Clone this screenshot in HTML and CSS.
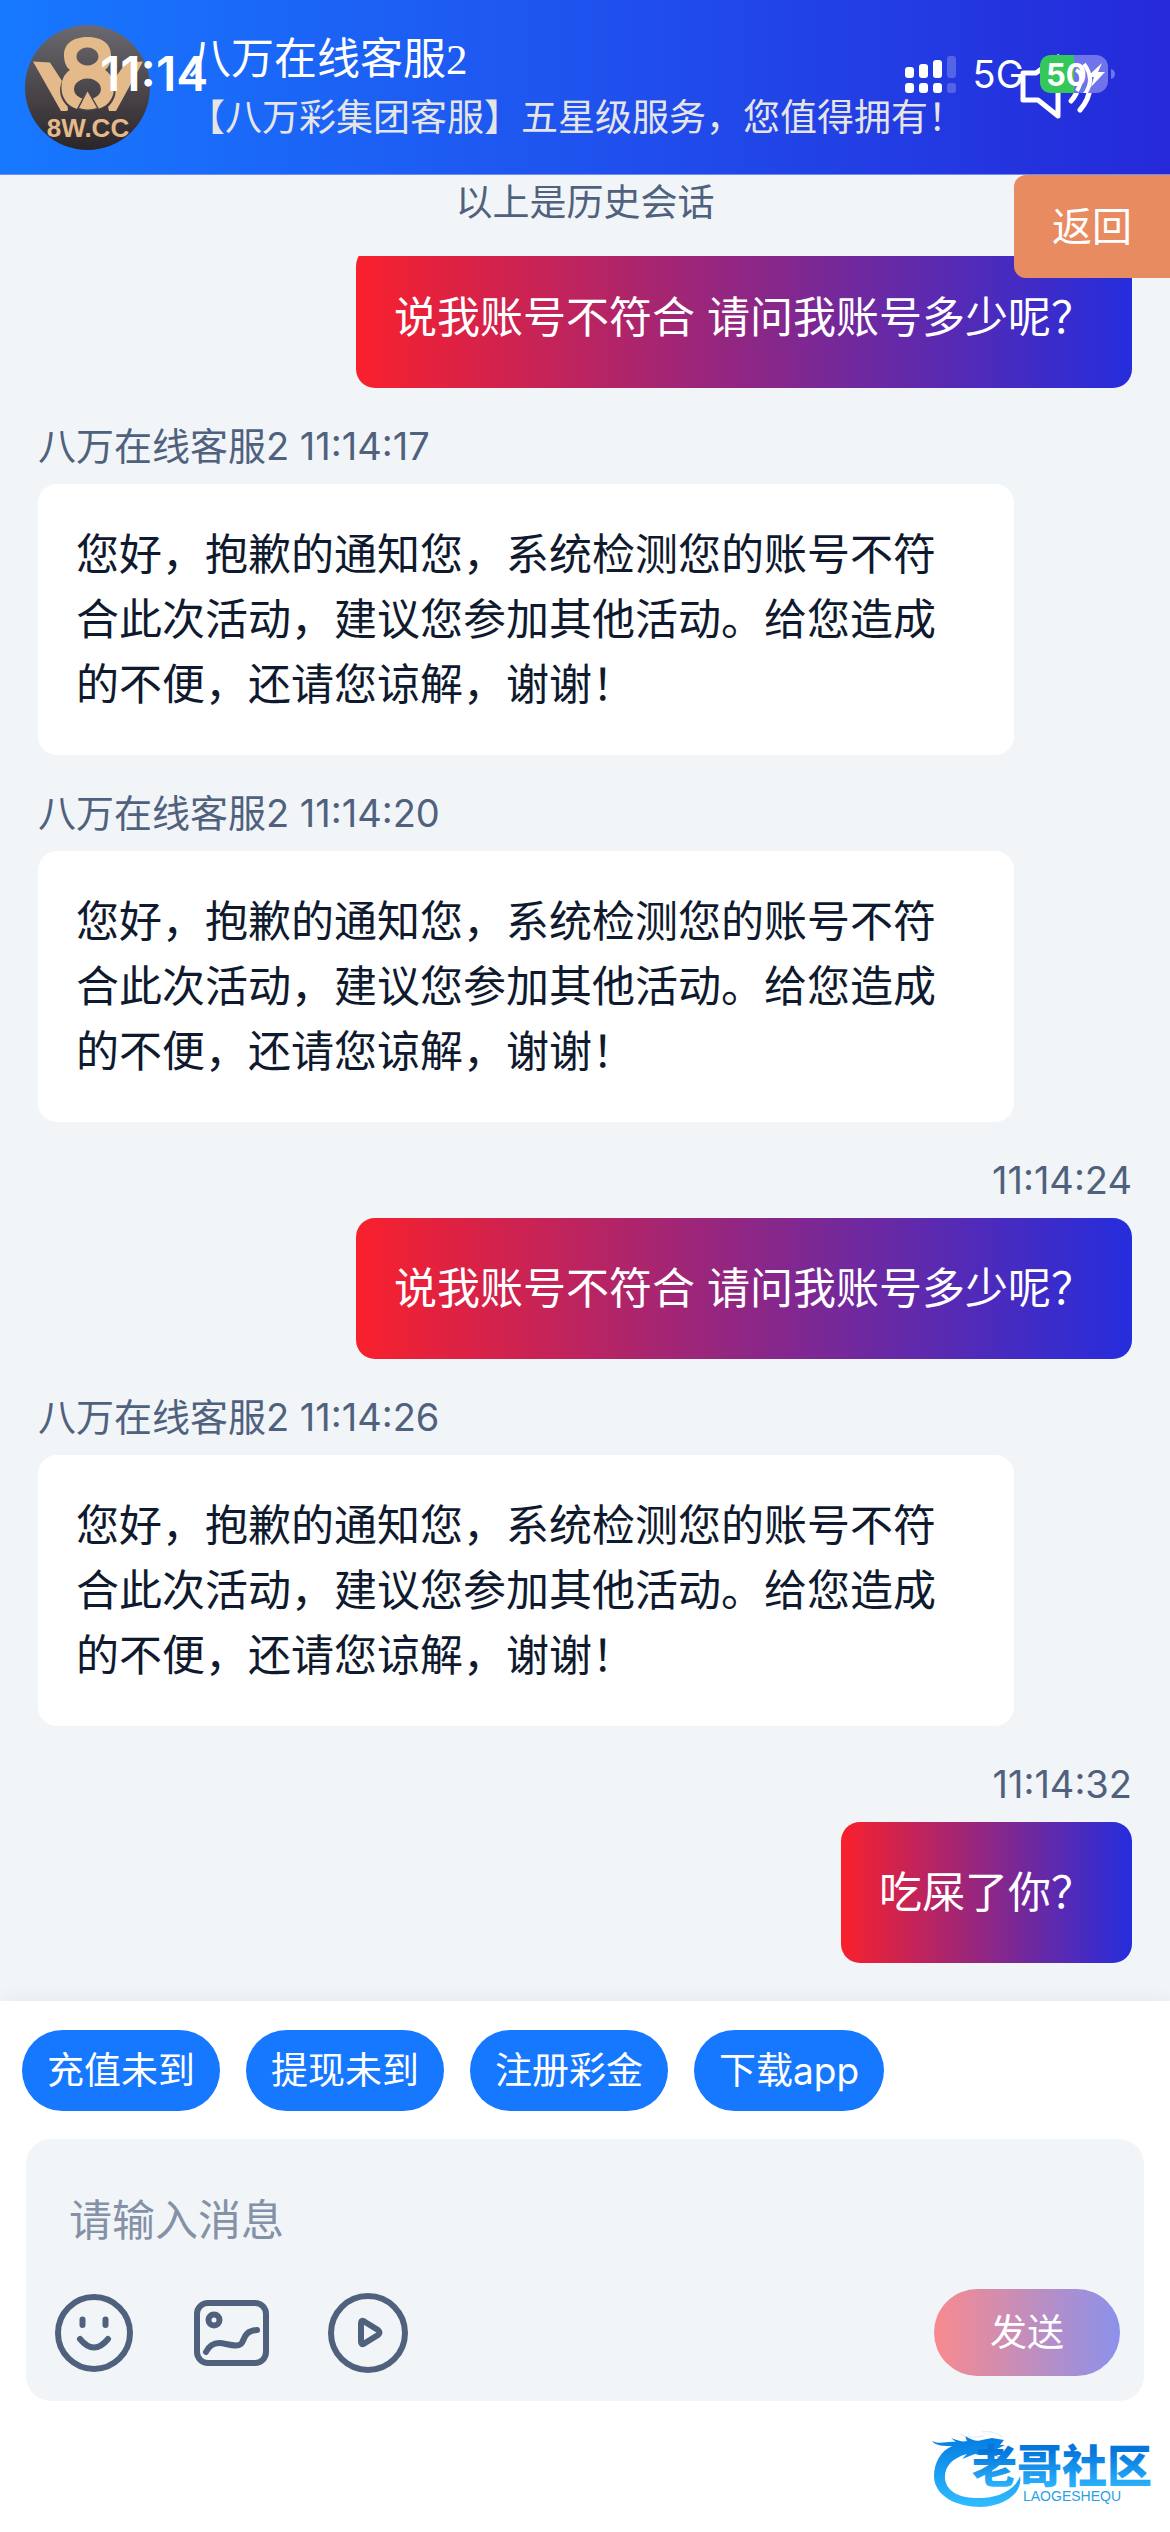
FILE: index.html
```html
<!DOCTYPE html>
<html lang="zh-CN">
<head>
<meta charset="utf-8">
<meta name="viewport" content="width=device-width, initial-scale=1">
<title>八万在线客服2</title>
<link rel="stylesheet" href="styles.css">
</head>
<body>
<div class="app">
  <header class="header">
    <svg class="avatar" viewBox="0 0 125 125" role="img" aria-label="8W.CC">
      <defs>
        <linearGradient id="avatarShade" x1="0" y1="0" x2="0" y2="1">
          <stop offset="0" stop-color="#6b6a70"/>
          <stop offset="1" stop-color="#2b2528"/>
        </linearGradient>
      </defs>
      <circle cx="62.500" cy="62.500" r="62.500" fill="url(#avatarShade)"/>
      <g fill="#e5ba8b">
        <path d="M8 36.500L25 37.500L37 56Q31 70 43 82L35 86L42 81Q44 85 42 86H36Z"/>
        <path d="M118 36.500L101 37.500L88 56Q95 70 83 82L84 86H91Z"/>
        <path fill-rule="evenodd" d="M62.500 12C49 12 39 18 39 30C39 37 41 42 45 45C39 49 36.500 55 36.500 63C36.500 72 42 81 52 84L61 67L73 84C84 81 89 72 89 63C89 55 86 49 80 45C84 42 86 37 86 30C86 18 76 12 62.500 12ZM62.500 22.500A11 9 0 1 1 62.400 22.500ZM62.500 53.500A13.500 10.500 0 1 1 62.400 53.500Z"/>
        <path d="M62.500 65L53 83.500Q62.500 87 73 83.500Z" stroke="#4a464b" stroke-width="1.500"/>
      </g>
      <text class="avatar-text" x="63" y="112" text-anchor="middle">8W.CC</text>
    </svg>
    <div class="agent">
      <h1 class="agent-name">八万在线客服2</h1>
      <p class="agent-note">【八万彩集团客服】五星级服务，您值得拥有！</p>
    </div>
    <button class="sound" type="button" aria-label="声音">
      <svg viewBox="0 0 80 80" fill="none" stroke="#fff" stroke-width="5" stroke-linecap="round" stroke-linejoin="round">
        <path d="M5 25H18L40 9V68L20 52H5Z"/>
        <path d="M54 23Q66 39 53 53"/>
        <path d="M60 16Q82 39 62 62"/>
      </svg>
    </button>
  </header>

  <div class="status">
    <span class="clock">11:14</span>
    <div class="status-right">
      <svg class="signal" viewBox="0 0 52 38" fill="#fff" aria-hidden="true">
        <rect x="0" y="12" width="9" height="11" rx="3"/><rect x="0" y="28" width="9" height="10" rx="3"/>
        <rect x="14" y="9" width="9" height="14" rx="3"/><rect x="14" y="28" width="9" height="10" rx="3"/>
        <rect x="28" y="5" width="9" height="18" rx="3"/><rect x="28" y="28" width="9" height="10" rx="3"/>
        <g opacity=".22"><rect x="42" y="1" width="9" height="22" rx="3"/><rect x="42" y="28" width="9" height="10" rx="3"/></g>
      </svg>
      <span class="network">5G</span>
      <svg class="battery" viewBox="0 0 76 38" role="img" aria-label="50%">
        <rect width="68" height="38" rx="12" fill="#6f74ea"/>
        <path d="M12 0H34V38H12Q0 38 0 26V12Q0 0 12 0Z" fill="#34c759"/>
        <path d="M71 14Q75 15 75 19Q75 23 71 24Z" fill="#6f74ea"/>
        <path d="M36 15Q46 20 37 36M44 9Q56 25 44 40" fill="none" stroke="#fff" stroke-width="4"/>
        <text class="battery-text" x="6" y="31">50</text>
        <path d="M62 8L47 22H54L51 32L65 17H58Z" fill="#fff"/>
      </svg>
    </div>
  </div>

  <main class="chat">
    <button class="back" type="button">返回</button>
    <p class="history">以上是历史会话</p>
    <div class="messages">
      <article class="message mine">
        <p class="bubble">说我账号不符合 请问我账号多少呢？</p>
      </article>
      <article class="message">
        <p class="meta">八万在线客服2 11:14:17</p>
        <p class="bubble">您好，抱歉的通知您，系统检测您的账号不符合此次活动，建议您参加其他活动。给您造成的不便，还请您谅解，谢谢！</p>
      </article>
      <article class="message">
        <p class="meta">八万在线客服2 11:14:20</p>
        <p class="bubble">您好，抱歉的通知您，系统检测您的账号不符合此次活动，建议您参加其他活动。给您造成的不便，还请您谅解，谢谢！</p>
      </article>
      <article class="message mine">
        <p class="meta">11:14:24</p>
        <p class="bubble">说我账号不符合 请问我账号多少呢？</p>
      </article>
      <article class="message">
        <p class="meta">八万在线客服2 11:14:26</p>
        <p class="bubble">您好，抱歉的通知您，系统检测您的账号不符合此次活动，建议您参加其他活动。给您造成的不便，还请您谅解，谢谢！</p>
      </article>
      <article class="message mine">
        <p class="meta">11:14:32</p>
        <p class="bubble">吃屎了你？</p>
      </article>
    </div>
  </main>

  <footer class="footer">
    <nav class="quick">
      <button class="chip" type="button">充值未到</button>
      <button class="chip" type="button">提现未到</button>
      <button class="chip" type="button">注册彩金</button>
      <button class="chip" type="button">下载app</button>
    </nav>
    <form class="composer">
      <input class="entry" type="text" placeholder="请输入消息" aria-label="请输入消息">
      <div class="tools">
        <button class="tool" type="button" aria-label="表情">
          <svg viewBox="0 0 80 80"><circle cx="40" cy="40" r="36"/><path d="M28.500 26.500V32M51.500 26.500V32M26 46Q40 63 54 46"/></svg>
        </button>
        <button class="tool" type="button" aria-label="图片">
          <svg viewBox="0 0 80 80"><rect x="6" y="10" width="69" height="60" rx="11"/><circle cx="23" cy="27" r="5.500"/><path d="M15 59C18 53 23 50 28 50C35 50 45 55 50 51C54 47 52 38 66 37"/></svg>
        </button>
        <button class="tool" type="button" aria-label="视频">
          <svg viewBox="0 0 80 80"><circle cx="40" cy="40" r="37"/><path d="M33 31V48Q33 53 37 50L50 42Q53 39.500 50 37L37 29Q33 26 33 31Z"/></svg>
        </button>
        <button class="send" type="submit">发送</button>
      </div>
    </form>
    <svg class="watermark" viewBox="0 0 222 78" role="img" aria-label="老哥社区 LAOGESHEQU">
      <defs>
        <linearGradient id="markBlue" gradientUnits="userSpaceOnUse" x1="0" y1="10" x2="0" y2="76">
          <stop offset="0" stop-color="#067fe4"/>
          <stop offset="1" stop-color="#30bcff"/>
        </linearGradient>
        <linearGradient id="markText" gradientUnits="userSpaceOnUse" x1="0" y1="22" x2="0" y2="60">
          <stop offset="0" stop-color="#0577dc"/>
          <stop offset="1" stop-color="#2fb9ff"/>
        </linearGradient>
      </defs>
      <path fill="url(#markBlue)" d="M0 11C8 15 15 11 24 12L19 8C27 11 31 12 35 11L33 6C40 10 45 12 50 10L60 8L72 10L68 15H73L65 19L71 23H62L67 27C56 23 50 26 43 24L30 29L35 24C20 28 12 37 13 49C15 64 32 69 50 68C70 67 84 58 88 46C91 63 73 76 49 77C24 77 3 66 2 47C2 32 9 21 20 16C12 16 4 16 0 11Z"/>
      <path d="M28 4Q36 9 52 6M50 2Q62 0 71 7" fill="none" stroke="#dcebf5" stroke-width="1"/>
      <text class="mark-cn" x="40" y="53" fill="url(#markText)">老哥社区</text>
      <text class="mark-en" x="91" y="71" fill="#2a9fe8">LAOGESHEQU</text>
    </svg>
  </footer>
</div>
</body>
</html>
```
FILE: styles.css
```css
* { box-sizing: border-box; }

body {
  margin: 0;
  font-family: Inter, "Noto Sans CJK SC", sans-serif;
  background: #fff;
}

h1, p { margin: 0; font-weight: 400; }

button {
  border: 0;
  margin: 0;
  padding: 0;
  background: none;
  color: #fff;
  font: inherit;
  cursor: pointer;
}

.app {
  position: relative;
  display: flex;
  flex-direction: column;
  height: 100vh;
  background: #f1f5f8;
}

/* Header */
.header {
  display: flex;
  align-items: center;
  gap: 38px;
  padding: 25px 72px 24px 25px;
  border-bottom: 1px solid #6f8df5;
  background: linear-gradient(90deg, #1779ff, #1f52ee 50%, #2529d9);
  color: #fff;
}

.avatar { flex: none; width: 125px; height: 125px; }
.avatar-text { font: 700 26px "Liberation Sans", sans-serif; fill: #e5ba8b; }
.agent { flex: 1; min-width: 0; padding-top: 2px; }

.agent-name {
  font-family: "Liberation Serif", "Noto Sans CJK SC", serif;
  font-size: 43px;
  line-height: 58px;
}

.agent-note {
  font-size: 37px;
  line-height: 58px;
  color: #e5e5e5;
  white-space: nowrap;
}

.sound { flex: none; width: 80px; height: 80px; }
.sound svg { display: block; }

/* Phone status bar, lies over the header */
.status {
  position: absolute;
  top: 46px;
  left: 0;
  right: 0;
  display: flex;
  justify-content: space-between;
  align-items: center;
  height: 56px;
  padding: 0 54px 0 100px;
  color: #fff;
  pointer-events: none;
}

.clock { font-size: 48px; font-weight: 600; line-height: 56px; }
.status-right { display: flex; align-items: center; gap: 16px; }
.signal { width: 52px; height: 38px; }
.network { font-size: 38px; line-height: 56px; }
.battery { width: 76px; height: 38px; }
.battery-text { font: 700 31px Inter, sans-serif; fill: #fff; }

/* Conversation */
.chat {
  position: relative;
  flex: 1;
  min-height: 0;
  display: flex;
  flex-direction: column;
}

.back {
  position: absolute;
  top: 0;
  right: 0;
  z-index: 1;
  padding: 0 38px;
  border-radius: 12px 0 0 12px;
  background: #e98b60;
  font-size: 40px;
  line-height: 103px;
}

.history {
  padding-bottom: 25px;
  font-size: 37px;
  line-height: 56px;
  text-align: center;
  color: #50617e;
}

.messages {
  flex: 1;
  min-height: 0;
  display: flex;
  flex-direction: column;
  justify-content: flex-end;
  gap: 30px;
  padding: 0 38px 38px;
  overflow: hidden;
}

.message {
  flex: none;
  display: flex;
  flex-direction: column;
  align-items: flex-start;
  gap: 10px;
  padding-right: 118px;
}

.mine { align-items: flex-end; padding-right: 0; }

.meta { font-size: 38px; line-height: 56px; color: #50617e; }

.bubble {
  padding: 38px;
  border-radius: 19px;
  background: #fff;
  color: #101a2f;
  font-size: 43px;
  line-height: 65px;
}

.mine .bubble {
  background: linear-gradient(90deg, #f9202c, #252ddd);
  color: #fff;
}

/* Footer */
.footer {
  position: relative;
  display: flex;
  flex-direction: column;
  gap: 28px;
  padding: 29px 26px 131px;
  background: #fff;
  box-shadow: 0 0 20px rgba(0, 0, 0, .06);
}

.quick { display: flex; flex-wrap: wrap; gap: 26px; margin: 0 -4px; }

.chip {
  padding: 0 25px;
  border-radius: 41px;
  background: #1677ff;
  font-size: 37px;
  line-height: 81px;
}

.composer {
  display: flex;
  flex-direction: column;
  gap: 13px;
  padding: 25px 24px 25px 28px;
  border-radius: 25px;
  background: #f1f5f8;
}

.entry {
  width: 100%;
  height: 112px;
  padding: 0 15px;
  border: 0;
  outline: 0;
  background: none;
  color: #101a2f;
  font: inherit;
  font-size: 43px;
}

.entry::placeholder { color: #8491a6; opacity: 1; }

.tools { display: flex; align-items: center; gap: 57px; }
.tool { flex: none; width: 80px; height: 80px; }

.tool svg {
  display: block;
  fill: none;
  stroke: #50617e;
  stroke-width: 6;
  stroke-linecap: round;
  stroke-linejoin: round;
}

.send {
  margin-left: auto;
  padding: 0 56px;
  border-radius: 44px;
  background: linear-gradient(90deg, #f98a8e, #8b91eb);
  font-size: 37px;
  line-height: 87px;
}

.watermark {
  position: absolute;
  right: 16px;
  bottom: 24px;
  width: 222px;
  height: 78px;
}

.mark-cn { font: 900 45px "Noto Sans CJK SC", sans-serif; }
.mark-en { font: 400 14px "Liberation Sans", sans-serif; }
```
